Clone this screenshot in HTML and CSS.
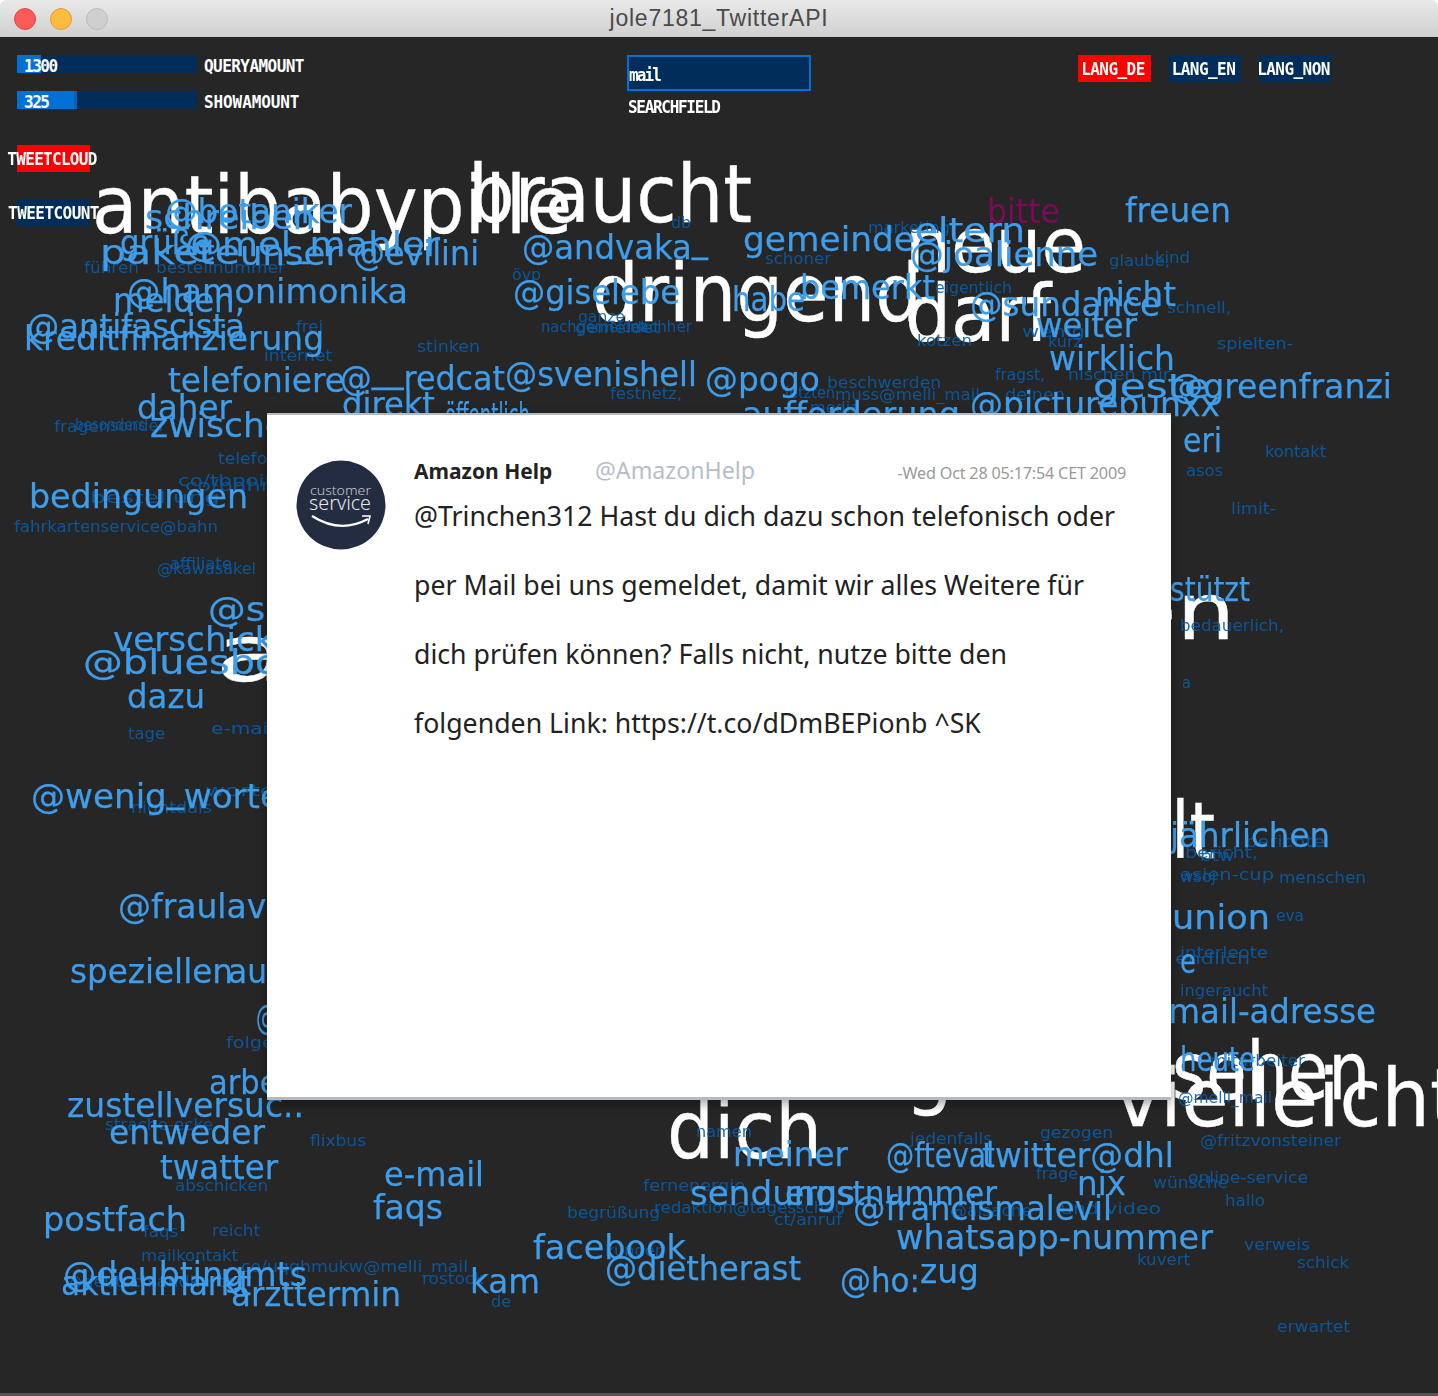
FILE: index.html
```html
<!DOCTYPE html>
<html lang="de">
<head>
<meta charset="utf-8">
<title>jole7181_TwitterAPI</title>
<link rel="stylesheet" href="styles.css">
</head>
<body>
<div class="window">
  <header class="titlebar">
    <div class="lights"><span class="light red"></span><span class="light amber"></span><span class="light off"></span></div>
    <div class="title">jole7181_TwitterAPI</div>
    <div></div>
  </header>
  <main class="sketch">
    <svg class="cloud" viewBox="0 37 1438 1356" width="1438" height="1356" aria-label="Tweetcloud">
      <g class="w">
        <text x="92" y="232" font-size="80" textLength="480" lengthAdjust="spacingAndGlyphs">antibabypille</text>
        <text x="468" y="221" font-size="80" textLength="284" lengthAdjust="spacingAndGlyphs">braucht</text>
        <text x="905" y="271" font-size="76" textLength="181" lengthAdjust="spacingAndGlyphs">neue</text>
        <text x="592" y="320" font-size="80" textLength="330" lengthAdjust="spacingAndGlyphs">dringend</text>
        <text x="905" y="340" font-size="78" textLength="146" lengthAdjust="spacingAndGlyphs">darf</text>
        <text x="215" y="680" font-size="78" textLength="150" lengthAdjust="spacingAndGlyphs">an</text>
        <text x="1120" y="638" font-size="78" textLength="115" lengthAdjust="spacingAndGlyphs">en</text>
        <text x="1090" y="857" font-size="78" textLength="125" lengthAdjust="spacingAndGlyphs">halt</text>
        <text x="667" y="1157" font-size="80" textLength="155" lengthAdjust="spacingAndGlyphs">dich</text>
        <text x="905" y="1098" font-size="80" textLength="48" lengthAdjust="spacingAndGlyphs">g</text>
        <text x="1172" y="1098" font-size="80" textLength="198" lengthAdjust="spacingAndGlyphs">sehen</text>
        <text x="1115" y="1125" font-size="80" textLength="345" lengthAdjust="spacingAndGlyphs">vielleicht</text>
      </g>
      <g class="m">
        <text x="987" y="222" font-size="34" textLength="73" lengthAdjust="spacingAndGlyphs">bitte</text>
      </g>
      <g class="d">
        <text x="84" y="272" font-size="16" textLength="55" lengthAdjust="spacingAndGlyphs">führen</text>
        <text x="156" y="272" font-size="16" textLength="129" lengthAdjust="spacingAndGlyphs">bestellnummer</text>
        <text x="296" y="331" font-size="16" textLength="27" lengthAdjust="spacingAndGlyphs">frei</text>
        <text x="264" y="360" font-size="16" textLength="68" lengthAdjust="spacingAndGlyphs">internet</text>
        <text x="417" y="351" font-size="16" textLength="63" lengthAdjust="spacingAndGlyphs">stinken</text>
        <text x="54" y="431" font-size="16" textLength="56" lengthAdjust="spacingAndGlyphs">fragen</text>
        <text x="75" y="429" font-size="16" textLength="70" lengthAdjust="spacingAndGlyphs">besonders</text>
        <text x="110" y="430" font-size="16" textLength="55" lengthAdjust="spacingAndGlyphs">sonder</text>
        <text x="218" y="463" font-size="16" textLength="60" lengthAdjust="spacingAndGlyphs">telefon</text>
        <text x="178" y="485" font-size="16" textLength="100" lengthAdjust="spacingAndGlyphs">co/tbpoiu</text>
        <text x="185" y="490" font-size="16" textLength="90" lengthAdjust="spacingAndGlyphs">co/bahn</text>
        <text x="90" y="502" font-size="16" textLength="130" lengthAdjust="spacingAndGlyphs">bestellung</text>
        <text x="14" y="531" font-size="16" textLength="204" lengthAdjust="spacingAndGlyphs">fahrkartenservice@bahn</text>
        <text x="170" y="568" font-size="16" textLength="62" lengthAdjust="spacingAndGlyphs">affiliate</text>
        <text x="157" y="573" font-size="16" textLength="99" lengthAdjust="spacingAndGlyphs">@kawasakel</text>
        <text x="128" y="738" font-size="16" textLength="37" lengthAdjust="spacingAndGlyphs">tage</text>
        <text x="211" y="733" font-size="16" textLength="70" lengthAdjust="spacingAndGlyphs">e-mail-</text>
        <text x="205" y="795" font-size="16" textLength="70" lengthAdjust="spacingAndGlyphs">worte</text>
        <text x="131" y="812" font-size="16" textLength="81" lengthAdjust="spacingAndGlyphs">nightdals</text>
        <text x="226" y="1047" font-size="16" textLength="60" lengthAdjust="spacingAndGlyphs">folgen</text>
        <text x="105" y="1129" font-size="16" textLength="108" lengthAdjust="spacingAndGlyphs">strache-ecke</text>
        <text x="310" y="1145" font-size="16" textLength="56" lengthAdjust="spacingAndGlyphs">flixbus</text>
        <text x="175" y="1190" font-size="16" textLength="93" lengthAdjust="spacingAndGlyphs">abschicken</text>
        <text x="143" y="1236" font-size="16" textLength="35" lengthAdjust="spacingAndGlyphs">faqs</text>
        <text x="212" y="1235" font-size="16" textLength="48" lengthAdjust="spacingAndGlyphs">reicht</text>
        <text x="141" y="1260" font-size="16" textLength="97" lengthAdjust="spacingAndGlyphs">mailkontakt</text>
        <text x="241" y="1271" font-size="16" textLength="227" lengthAdjust="spacingAndGlyphs">co/uqqhmukw@melli_mail</text>
        <text x="65" y="1286" font-size="16" textLength="170" lengthAdjust="spacingAndGlyphs">@deutschlandkarte</text>
        <text x="422" y="1283" font-size="16" textLength="62" lengthAdjust="spacingAndGlyphs">rostock</text>
        <text x="491" y="1306" font-size="16" textLength="20" lengthAdjust="spacingAndGlyphs">de</text>
        <text x="671" y="227" font-size="16" textLength="20" lengthAdjust="spacingAndGlyphs">db</text>
        <text x="868" y="232" font-size="16" textLength="82" lengthAdjust="spacingAndGlyphs">marketing</text>
        <text x="765" y="263" font-size="16" textLength="66" lengthAdjust="spacingAndGlyphs">schoner</text>
        <text x="512" y="279" font-size="16" textLength="29" lengthAdjust="spacingAndGlyphs">övp</text>
        <text x="578" y="321" font-size="16" textLength="47" lengthAdjust="spacingAndGlyphs">ganze</text>
        <text x="541" y="331" font-size="16" textLength="105" lengthAdjust="spacingAndGlyphs">nachgemeldet</text>
        <text x="575" y="332" font-size="16" textLength="85" lengthAdjust="spacingAndGlyphs">gemeldet</text>
        <text x="630" y="331" font-size="16" textLength="62" lengthAdjust="spacingAndGlyphs">nachher</text>
        <text x="935" y="292" font-size="16" textLength="77" lengthAdjust="spacingAndGlyphs">eigentlich</text>
        <text x="917" y="345" font-size="16" textLength="55" lengthAdjust="spacingAndGlyphs">kotzen</text>
        <text x="1109" y="265" font-size="16" textLength="61" lengthAdjust="spacingAndGlyphs">glaube,</text>
        <text x="1155" y="262" font-size="16" textLength="35" lengthAdjust="spacingAndGlyphs">kind</text>
        <text x="1167" y="312" font-size="16" textLength="64" lengthAdjust="spacingAndGlyphs">schnell,</text>
        <text x="1022" y="336" font-size="16" textLength="63" lengthAdjust="spacingAndGlyphs">wenig</text>
        <text x="1048" y="346" font-size="16" textLength="34" lengthAdjust="spacingAndGlyphs">kurz</text>
        <text x="1217" y="348" font-size="16" textLength="76" lengthAdjust="spacingAndGlyphs">spielten-</text>
        <text x="995" y="379" font-size="16" textLength="50" lengthAdjust="spacingAndGlyphs">fragst,</text>
        <text x="1068" y="379" font-size="16" textLength="102" lengthAdjust="spacingAndGlyphs">nischen mir</text>
        <text x="1005" y="399" font-size="16" textLength="60" lengthAdjust="spacingAndGlyphs">deinen</text>
        <text x="835" y="399" font-size="16" textLength="145" lengthAdjust="spacingAndGlyphs">muss@melli_mail</text>
        <text x="827" y="387" font-size="16" textLength="114" lengthAdjust="spacingAndGlyphs">beschwerden</text>
        <text x="785" y="397" font-size="16" textLength="50" lengthAdjust="spacingAndGlyphs">letzten</text>
        <text x="610" y="398" font-size="16" textLength="72" lengthAdjust="spacingAndGlyphs">festnetz,</text>
        <text x="810" y="412" font-size="16" textLength="50" lengthAdjust="spacingAndGlyphs">media</text>
        <text x="1265" y="456" font-size="16" textLength="61" lengthAdjust="spacingAndGlyphs">kontakt</text>
        <text x="1186" y="475" font-size="16" textLength="37" lengthAdjust="spacingAndGlyphs">asos</text>
        <text x="1231" y="513" font-size="16" textLength="45" lengthAdjust="spacingAndGlyphs">limit-</text>
        <text x="1180" y="630" font-size="16" textLength="104" lengthAdjust="spacingAndGlyphs">bedauerlich,</text>
        <text x="1182" y="687" font-size="16" textLength="9" lengthAdjust="spacingAndGlyphs">a</text>
        <text x="1245" y="846" font-size="16" textLength="80" lengthAdjust="spacingAndGlyphs">berichte</text>
        <text x="1185" y="857" font-size="16" textLength="73" lengthAdjust="spacingAndGlyphs">bericht,</text>
        <text x="1200" y="860" font-size="16" textLength="34" lengthAdjust="spacingAndGlyphs">btw</text>
        <text x="1180" y="879" font-size="16" textLength="94" lengthAdjust="spacingAndGlyphs">asien-cup</text>
        <text x="1180" y="881" font-size="16" textLength="36" lengthAdjust="spacingAndGlyphs">wsoj</text>
        <text x="1279" y="882" font-size="16" textLength="87" lengthAdjust="spacingAndGlyphs">menschen</text>
        <text x="1276" y="920" font-size="16" textLength="28" lengthAdjust="spacingAndGlyphs">eva</text>
        <text x="1180" y="957" font-size="16" textLength="88" lengthAdjust="spacingAndGlyphs">interleote</text>
        <text x="1175" y="963" font-size="16" textLength="75" lengthAdjust="spacingAndGlyphs">endlich</text>
        <text x="1180" y="995" font-size="16" textLength="88" lengthAdjust="spacingAndGlyphs">ingeraucht</text>
        <text x="1210" y="1065" font-size="16" textLength="95" lengthAdjust="spacingAndGlyphs">mitarbeiter</text>
        <text x="1178" y="1102" font-size="16" textLength="94" lengthAdjust="spacingAndGlyphs">@melli_mail</text>
        <text x="696" y="1136" font-size="16" textLength="56" lengthAdjust="spacingAndGlyphs">namen</text>
        <text x="910" y="1143" font-size="16" textLength="82" lengthAdjust="spacingAndGlyphs">jedenfalls</text>
        <text x="1040" y="1137" font-size="16" textLength="73" lengthAdjust="spacingAndGlyphs">gezogen</text>
        <text x="1200" y="1145" font-size="16" textLength="141" lengthAdjust="spacingAndGlyphs">@fritzvonsteiner</text>
        <text x="1036" y="1178" font-size="16" textLength="42" lengthAdjust="spacingAndGlyphs">frage</text>
        <text x="1153" y="1187" font-size="16" textLength="75" lengthAdjust="spacingAndGlyphs">wünsche</text>
        <text x="1188" y="1182" font-size="16" textLength="120" lengthAdjust="spacingAndGlyphs">online-service</text>
        <text x="1225" y="1205" font-size="16" textLength="40" lengthAdjust="spacingAndGlyphs">hallo</text>
        <text x="643" y="1190" font-size="16" textLength="102" lengthAdjust="spacingAndGlyphs">fernenergie</text>
        <text x="654" y="1212" font-size="16" textLength="191" lengthAdjust="spacingAndGlyphs">redaktion@tagesschau</text>
        <text x="567" y="1217" font-size="16" textLength="93" lengthAdjust="spacingAndGlyphs">begrüßung</text>
        <text x="774" y="1224" font-size="16" textLength="68" lengthAdjust="spacingAndGlyphs">ct/anruf</text>
        <text x="950" y="1215" font-size="16" textLength="82" lengthAdjust="spacingAndGlyphs">@alsache</text>
        <text x="1060" y="1213" font-size="16" textLength="101" lengthAdjust="spacingAndGlyphs">und video</text>
        <text x="1244" y="1249" font-size="16" textLength="66" lengthAdjust="spacingAndGlyphs">verweis</text>
        <text x="1137" y="1264" font-size="16" textLength="53" lengthAdjust="spacingAndGlyphs">kuvert</text>
        <text x="1297" y="1267" font-size="16" textLength="52" lengthAdjust="spacingAndGlyphs">schick</text>
        <text x="1277" y="1331" font-size="16" textLength="73" lengthAdjust="spacingAndGlyphs">erwartet</text>
        <text x="605" y="1255" font-size="16" textLength="60" lengthAdjust="spacingAndGlyphs">kunden</text>
      </g>
      <g class="b">
        <text x="165" y="222" font-size="34" textLength="187" lengthAdjust="spacingAndGlyphs">@botaniker</text>
        <text x="145" y="228" font-size="34" textLength="170" lengthAdjust="spacingAndGlyphs">schreiben</text>
        <text x="120" y="253" font-size="34" textLength="90" lengthAdjust="spacingAndGlyphs">grüße</text>
        <text x="185" y="255" font-size="34" textLength="255" lengthAdjust="spacingAndGlyphs">@mel_mahler</text>
        <text x="100" y="263" font-size="34" textLength="140" lengthAdjust="spacingAndGlyphs">pakete</text>
        <text x="240" y="264" font-size="34" textLength="100" lengthAdjust="spacingAndGlyphs">unser</text>
        <text x="353" y="264" font-size="34" textLength="126" lengthAdjust="spacingAndGlyphs">@evilini</text>
        <text x="127" y="302" font-size="33" textLength="281" lengthAdjust="spacingAndGlyphs">@hamonimonika</text>
        <text x="113" y="311" font-size="33" textLength="132" lengthAdjust="spacingAndGlyphs">melden,</text>
        <text x="27" y="337" font-size="33" textLength="218" lengthAdjust="spacingAndGlyphs">@antifascista</text>
        <text x="24" y="349" font-size="33" textLength="300" lengthAdjust="spacingAndGlyphs">kreditfinanzierung</text>
        <text x="168" y="391" font-size="34" textLength="177" lengthAdjust="spacingAndGlyphs">telefoniere</text>
        <text x="340" y="389" font-size="34" textLength="165" lengthAdjust="spacingAndGlyphs">@<tspan dy="-8">__</tspan><tspan dy="8">redcat</tspan></text>
        <text x="505" y="385" font-size="34" textLength="192" lengthAdjust="spacingAndGlyphs">@svenishell</text>
        <text x="705" y="390" font-size="34" textLength="115" lengthAdjust="spacingAndGlyphs">@pogo</text>
        <text x="137" y="418" font-size="34" textLength="95" lengthAdjust="spacingAndGlyphs">daher</text>
        <text x="150" y="436" font-size="34" textLength="158" lengthAdjust="spacingAndGlyphs">zwischen</text>
        <text x="342" y="415" font-size="34" textLength="93" lengthAdjust="spacingAndGlyphs">direkt</text>
        <text x="445" y="426" font-size="34" textLength="85" lengthAdjust="spacingAndGlyphs">öffentlich</text>
        <text x="29" y="507" font-size="33" textLength="219" lengthAdjust="spacingAndGlyphs">bedingungen</text>
        <text x="208" y="620" font-size="33" textLength="190" lengthAdjust="spacingAndGlyphs">@sonntag</text>
        <text x="113" y="650" font-size="33" textLength="175" lengthAdjust="spacingAndGlyphs">verschickt</text>
        <text x="83" y="673" font-size="33" textLength="220" lengthAdjust="spacingAndGlyphs">@bluesboy</text>
        <text x="127" y="707" font-size="33" textLength="78" lengthAdjust="spacingAndGlyphs">dazu</text>
        <text x="31" y="807" font-size="33" textLength="250" lengthAdjust="spacingAndGlyphs">@wenig<tspan dy="-6">_</tspan><tspan dy="6">worte</tspan></text>
        <text x="118" y="917" font-size="33" textLength="240" lengthAdjust="spacingAndGlyphs">@fraulavendel</text>
        <text x="70" y="982" font-size="33" textLength="163" lengthAdjust="spacingAndGlyphs">speziellen</text>
        <text x="228" y="982" font-size="33" textLength="76" lengthAdjust="spacingAndGlyphs">auch</text>
        <text x="256" y="1028" font-size="33" textLength="60" lengthAdjust="spacingAndGlyphs">@mal</text>
        <text x="209" y="1093" font-size="33" textLength="90" lengthAdjust="spacingAndGlyphs">arbeit</text>
        <text x="67" y="1116" font-size="33" textLength="237" lengthAdjust="spacingAndGlyphs">zustellversuc..</text>
        <text x="109" y="1143" font-size="33" textLength="156" lengthAdjust="spacingAndGlyphs">entweder</text>
        <text x="160" y="1178" font-size="33" textLength="118" lengthAdjust="spacingAndGlyphs">twatter</text>
        <text x="384" y="1185" font-size="33" textLength="100" lengthAdjust="spacingAndGlyphs">e-mail</text>
        <text x="373" y="1218" font-size="33" textLength="70" lengthAdjust="spacingAndGlyphs">faqs</text>
        <text x="43" y="1230" font-size="33" textLength="144" lengthAdjust="spacingAndGlyphs">postfach</text>
        <text x="63" y="1285" font-size="33" textLength="244" lengthAdjust="spacingAndGlyphs">@doubtingmts</text>
        <text x="61" y="1294" font-size="33" textLength="190" lengthAdjust="spacingAndGlyphs">aktienmarkt</text>
        <text x="231" y="1305" font-size="33" textLength="170" lengthAdjust="spacingAndGlyphs">arzttermin</text>
        <text x="470" y="1292" font-size="33" textLength="70" lengthAdjust="spacingAndGlyphs">kam</text>
        <text x="522" y="258" font-size="33" textLength="186" lengthAdjust="spacingAndGlyphs">@andvaka<tspan dy="-7">_</tspan></text>
        <text x="743" y="250" font-size="34" textLength="172" lengthAdjust="spacingAndGlyphs">gemeinde</text>
        <text x="915" y="241" font-size="34" textLength="110" lengthAdjust="spacingAndGlyphs">eltern</text>
        <text x="513" y="303" font-size="34" textLength="167" lengthAdjust="spacingAndGlyphs">@giselebe</text>
        <text x="732" y="310" font-size="34" textLength="73" lengthAdjust="spacingAndGlyphs">habe</text>
        <text x="800" y="298" font-size="34" textLength="135" lengthAdjust="spacingAndGlyphs">bemerkt</text>
        <text x="910" y="265" font-size="33" textLength="188" lengthAdjust="spacingAndGlyphs">@joalienne</text>
        <text x="1125" y="221" font-size="34" textLength="106" lengthAdjust="spacingAndGlyphs">freuen</text>
        <text x="1095" y="305" font-size="33" textLength="81" lengthAdjust="spacingAndGlyphs">nicht</text>
        <text x="970" y="315" font-size="33" textLength="190" lengthAdjust="spacingAndGlyphs">@sundance</text>
        <text x="1036" y="336" font-size="33" textLength="101" lengthAdjust="spacingAndGlyphs">weiter</text>
        <text x="1049" y="369" font-size="33" textLength="126" lengthAdjust="spacingAndGlyphs">wirklich</text>
        <text x="1093" y="397" font-size="33" textLength="117" lengthAdjust="spacingAndGlyphs">geste</text>
        <text x="1170" y="397" font-size="33" textLength="222" lengthAdjust="spacingAndGlyphs">@greenfranzi</text>
        <text x="970" y="415" font-size="33" textLength="250" lengthAdjust="spacingAndGlyphs">@picturepunxx</text>
        <text x="742" y="425" font-size="33" textLength="218" lengthAdjust="spacingAndGlyphs">aufforderung</text>
        <text x="1183" y="451" font-size="33" textLength="39" lengthAdjust="spacingAndGlyphs">eri</text>
        <text x="1095" y="600" font-size="33" textLength="155" lengthAdjust="spacingAndGlyphs">unterstützt</text>
        <text x="1170" y="846" font-size="33" textLength="160" lengthAdjust="spacingAndGlyphs">jährlichen</text>
        <text x="1172" y="928" font-size="33" textLength="98" lengthAdjust="spacingAndGlyphs">union</text>
        <text x="1180" y="972" font-size="33" textLength="16" lengthAdjust="spacingAndGlyphs">e</text>
        <text x="1137" y="1022" font-size="33" textLength="239" lengthAdjust="spacingAndGlyphs">e-mail-adresse</text>
        <text x="1180" y="1070" font-size="33" textLength="75" lengthAdjust="spacingAndGlyphs">heute</text>
        <text x="733" y="1165" font-size="33" textLength="115" lengthAdjust="spacingAndGlyphs">meiner</text>
        <text x="886" y="1166" font-size="33" textLength="108" lengthAdjust="spacingAndGlyphs">@fteval</text>
        <text x="982" y="1166" font-size="33" textLength="192" lengthAdjust="spacingAndGlyphs">twitter@dhl</text>
        <text x="1077" y="1194" font-size="33" textLength="49" lengthAdjust="spacingAndGlyphs">nix</text>
        <text x="690" y="1204" font-size="33" textLength="165" lengthAdjust="spacingAndGlyphs">sendungs</text>
        <text x="785" y="1204" font-size="33" textLength="212" lengthAdjust="spacingAndGlyphs">ernstnummer</text>
        <text x="853" y="1219" font-size="33" textLength="259" lengthAdjust="spacingAndGlyphs">@francismalevil</text>
        <text x="896" y="1248" font-size="33" textLength="317" lengthAdjust="spacingAndGlyphs">whatsapp-nummer</text>
        <text x="533" y="1258" font-size="33" textLength="153" lengthAdjust="spacingAndGlyphs">facebook</text>
        <text x="605" y="1279" font-size="33" textLength="196" lengthAdjust="spacingAndGlyphs">@dietherast</text>
        <text x="840" y="1291" font-size="33" textLength="80" lengthAdjust="spacingAndGlyphs">@ho:</text>
        <text x="920" y="1282" font-size="33" textLength="59" lengthAdjust="spacingAndGlyphs">zug</text>
      </g>
    </svg>

    <div class="controls">
      <div class="col-left">
        <div class="slider">
          <div class="track"><span class="fill fill-query"></span><span class="value">1300</span></div>
          <span class="label">QUERYAMOUNT</span>
        </div>
        <div class="slider slider-second">
          <div class="track"><span class="fill fill-show"></span><span class="value">325</span></div>
          <span class="label label-show">SHOWAMOUNT</span>
        </div>
        <div class="toggle toggle-first active"><span class="label">TWEETCLOUD</span></div>
        <div class="toggle toggle-second"><span class="label">TWEETCOUNT</span></div>
      </div>
      <div class="col-search">
        <div class="search"><span class="search-value">mail</span></div>
        <span class="label search-label">SEARCHFIELD</span>
      </div>
      <div class="col-lang">
        <div class="toggle lang active"><span class="label">LANG_DE</span></div>
        <div class="toggle lang"><span class="label">LANG_EN</span></div>
        <div class="toggle lang"><span class="label">LANG_NON</span></div>
      </div>
    </div>

    <article class="modal">
      <svg class="avatar" viewBox="0 0 90 90" width="90" height="90" aria-label="customer service">
        <circle cx="45" cy="45" r="44.5" class="avatar-disc"/>
        <text x="14" y="35" font-size="13" textLength="61" lengthAdjust="spacingAndGlyphs" class="avatar-small">customer</text>
        <text x="13" y="50" font-size="20" textLength="62" lengthAdjust="spacingAndGlyphs" class="avatar-big">service</text>
        <path d="M16 56 Q44 74 72 59" class="avatar-arrow"/>
        <path d="M66 56 L74 56 L72 64" class="avatar-arrow-head"/>
      </svg>
      <div class="tweet">
        <div class="tweet-head">
          <span class="name">Amazon Help</span>
          <span class="handle">@AmazonHelp</span>
          <span class="date">-Wed Oct 28 05:17:54 CET 2009</span>
        </div>
        <div class="tweet-body">
          <p>@Trinchen312 Hast du dich dazu schon telefonisch oder</p>
          <p>per Mail bei uns gemeldet, damit wir alles Weitere für</p>
          <p>dich prüfen können? Falls nicht, nutze bitte den</p>
          <p>folgenden Link: https://t.co/dDmBEPionb ^SK</p>
        </div>
      </div>
    </article>
  </main>
</div>
</body>
</html>
```
FILE: styles.css
```css
* { box-sizing: border-box; }
html, body { margin: 0; padding: 0; background: #fff; }
.window {
  width: 1438px;
  height: 1396px;
  display: flex;
  flex-direction: column;
  overflow: hidden;
  border-radius: 6px 6px 0 0;
  border-bottom: 3px solid #555;
}
.titlebar {
  flex: none;
  height: 38px;
  display: grid;
  grid-template-columns: 1fr auto 1fr;
  align-items: center;
  background: linear-gradient(#e9e9e9, #d0d0d0);
  border-bottom: 1px solid #222;
}
.lights { display: flex; gap: 14px; padding-left: 14px; }
.light { width: 22px; height: 22px; border-radius: 50%; display: block; }
.red { background: #fc5b57; border: 1px solid #df4744; }
.amber { background: #fdbb40; border: 1px solid #de9f34; }
.off { background: #cfcfcf; border: 1px solid #bcbcbc; }
.title {
  font: 23px "Liberation Sans", sans-serif;
  letter-spacing: 0.75px;
  color: #4a4a4a;
}
.sketch {
  position: relative;
  flex: 1;
  background: #262626;
  overflow: hidden;
}
.cloud {
  position: absolute;
  left: 0;
  top: 0;
  filter: blur(0.45px);
}
.cloud text { font-family: "DejaVu Sans", sans-serif; }
.w { fill: #fff; stroke: #fff; stroke-width: .4; }
.m { fill: #7c0a55; }
.d { fill: #0a5ca6; opacity: .9; }
.b { fill: #3f9dea; stroke: #3f9dea; stroke-width: .25; }

.controls {
  position: relative;
  display: flex;
  align-items: flex-start;
  padding-top: 17px;
}
.label, .value, .search-value {
  display: inline-block;
  font: 700 16px/1 "DejaVu Sans Mono", monospace;
  letter-spacing: -0.55px;
  color: #fff;
  white-space: nowrap;
  transform: scaleY(1.12);
}
.col-left { width: 627px; padding-left: 17px; }
.slider { display: flex; align-items: center; gap: 7px; }
.slider .label, .slider .value { transform: translateY(2px) scaleY(1.12); }
.slider-second { margin-top: 18px; }
.label-show { letter-spacing: -0.1px; }
.track {
  position: relative;
  width: 180px;
  height: 18px;
  background: #002d5a;
  display: flex;
  align-items: center;
  padding-left: 7px;
}
.fill { position: absolute; left: 0; top: 0; bottom: 0; background: #0170d7; }
.fill-query { width: 24px; }
.fill-show { width: 60px; border-right: 3px solid #0a5fb0; }
.value { position: relative; letter-spacing: -1.5px; }
.toggle {
  width: 73px;
  height: 27px;
  display: flex;
  align-items: center;
  justify-content: center;
  background: #002d5a;
}
.toggle.active { background: #f00; }
.toggle-first { margin-top: 36px; padding-right: 3px; }
.toggle-second { margin-top: 27px; }
.toggle-first .label { letter-spacing: -0.7px; }
.col-search { width: 184px; display: flex; flex-direction: column; }
.search {
  height: 36px;
  background: #002d5a;
  border: 2px solid #0170d7;
  display: flex;
  align-items: center;
  padding: 4px 0 0 0;
}
.search-value { letter-spacing: -1.9px; }
.search-label { margin: 8px 0 0 1px; letter-spacing: -1.3px; align-self: flex-start; }
.col-lang { margin-left: 267px; display: flex; gap: 18px; }
.lang { width: 72px; padding-right: 3px; }
.lang.active { width: 73px; }

.modal {
  position: absolute;
  left: 267px;
  top: 375px;
  width: 904px;
  height: 687px;
  display: flex;
  gap: 28px;
  padding: 45px 0 0 29px;
  background: #fff;
  border-top: 2px solid #b4bac4;
  border-bottom: 3px solid #b4bac4;
  box-shadow: 0 4px 10px rgba(0, 0, 0, .35);
}
.avatar { flex: none; }
.avatar-disc { fill: #232c40; }
.avatar text { font-family: "Noto Sans", sans-serif; font-weight: 300; }
.avatar-small { fill: #c4c9d2; }
.avatar-big { fill: #e6e8ec; }
.avatar-arrow { fill: none; stroke: #fff; stroke-width: 2.2; }
.avatar-arrow-head { fill: none; stroke: #fff; stroke-width: 1.6; }
.tweet { flex: 1; font-family: "Noto Sans", sans-serif; margin-top: -6px; }
.tweet-head {
  display: flex;
  align-items: baseline;
  padding-right: 45px;
  height: 31px;
}
.name { font-size: 21px; font-weight: 700; color: #222; width: 181px; }
.handle { font-size: 23.2px; color: #b7bec9; }
.date { margin-left: auto; font-size: 16.2px; color: #9a9a9a; letter-spacing: -0.2px; }
.tweet-body { margin-top: 7px; }
.tweet-body p {
  margin: 0;
  height: 69px;
  font-size: 26.7px;
  line-height: 48px;
  color: #222;
  white-space: nowrap;
}
```
